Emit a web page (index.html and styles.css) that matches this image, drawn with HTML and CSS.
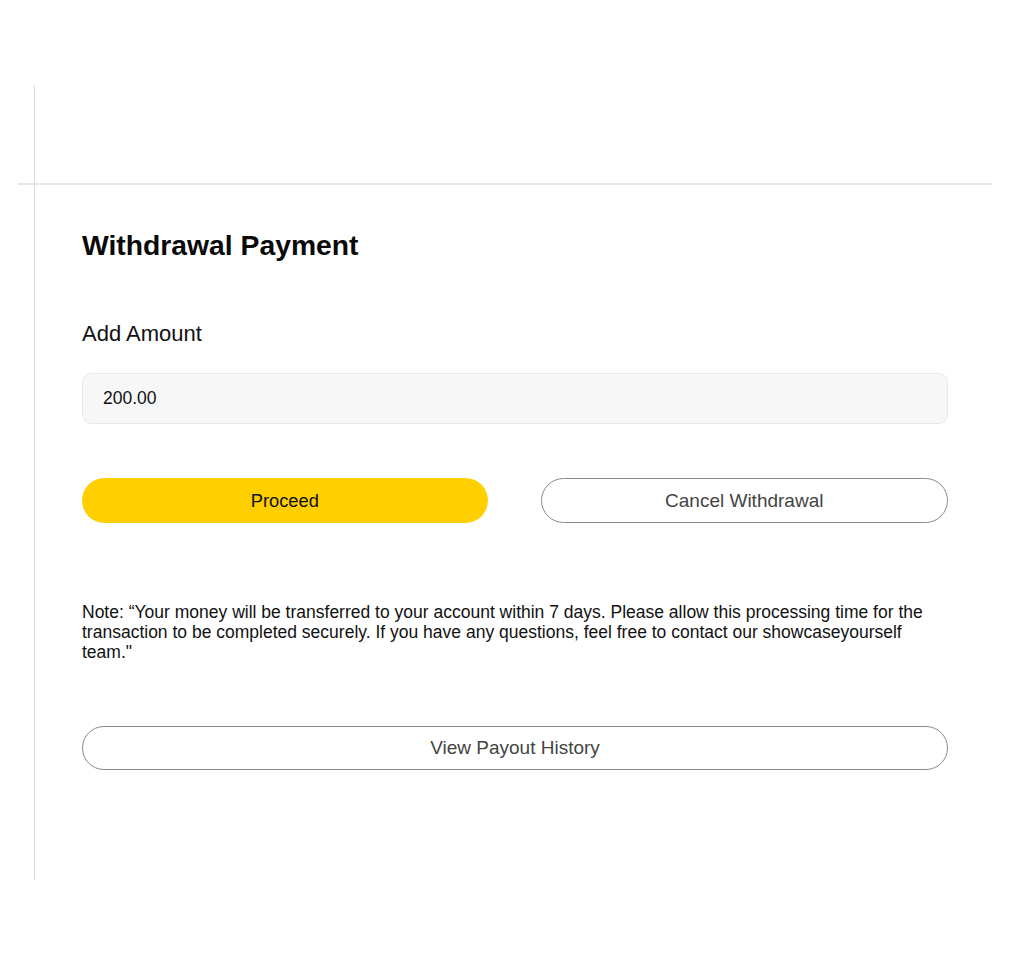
FILE: index.html
```html
<!DOCTYPE html>
<html>
<head>
<meta charset="utf-8">
<link rel="stylesheet" href="styles.css">
</head>
<body>
<div class="frame">
  <div class="header"></div>
  <div class="rule"></div>
  <main class="content">
    <h1 class="title">Withdrawal Payment</h1>
    <label class="label" for="amount">Add Amount</label>
    <input id="amount" class="amount" type="text" value="200.00">
    <div class="actions">
      <button class="btn btn-primary">Proceed</button>
      <button class="btn btn-outline">Cancel Withdrawal</button>
    </div>
    <p class="note">Note: “Your money will be transferred to your account within 7 days. Please allow this processing time for the transaction to be completed securely. If you have any questions, feel free to contact our showcaseyourself team."</p>
    <button class="btn btn-outline btn-wide">View Payout History</button>
  </main>
</div>
</body>
</html>
```
FILE: styles.css
```css
html, body {
  margin: 0;
  padding: 0;
  background: #ffffff;
}
body {
  font-family: "Liberation Sans", Arial, Helvetica, sans-serif;
  color: #111;
}
.frame {
  margin-top: 85px;
  margin-left: 34px;
  width: 957px;
  height: 795px;
  border-left: 1px solid #d9d9d9;
  box-sizing: border-box;
}
.header {
  height: 98px;
}
.rule {
  height: 2px;
  background: #e6e6e6;
  margin-left: -17px;
  width: 974px;
}
.content {
  padding-left: 47px;
  width: 866px;
  display: flex;
  flex-direction: column;
}
.title {
  margin: 43px 0 0;
  font-size: 28.3px;
  line-height: 34px;
  font-weight: 700;
  color: #0a0a0a;
}
.label {
  margin-top: 59px;
  font-size: 22px;
  line-height: 26px;
  color: #111;
}
.amount {
  margin-top: 26px;
  height: 51px;
  box-sizing: border-box;
  border: 1px solid #e9e9e9;
  border-radius: 9px;
  background: #f7f7f7;
  padding: 0 20px;
  font-family: inherit;
  font-size: 17.5px;
  color: #111;
  outline: none;
}
.actions {
  margin-top: 54px;
  display: flex;
  gap: 53px;
}
.btn {
  height: 45px;
  box-sizing: border-box;
  border-radius: 23px;
  font-family: inherit;
  font-size: 19px;
  cursor: pointer;
  padding: 0;
}
.actions .btn {
  flex: 1;
}
.btn-primary {
  background: #ffcf00;
  border: none;
  color: #111;
  font-size: 18.3px;
}
.btn-outline {
  background: #fff;
  border: 1px solid #8a8a8a;
  color: #444;
}
.note {
  margin: 79px 0 0;
  font-size: 17.5px;
  line-height: 20px;
  color: #111;
}
.btn-wide {
  margin-top: 64px;
  height: 44px;
  width: 100%;
}
```
